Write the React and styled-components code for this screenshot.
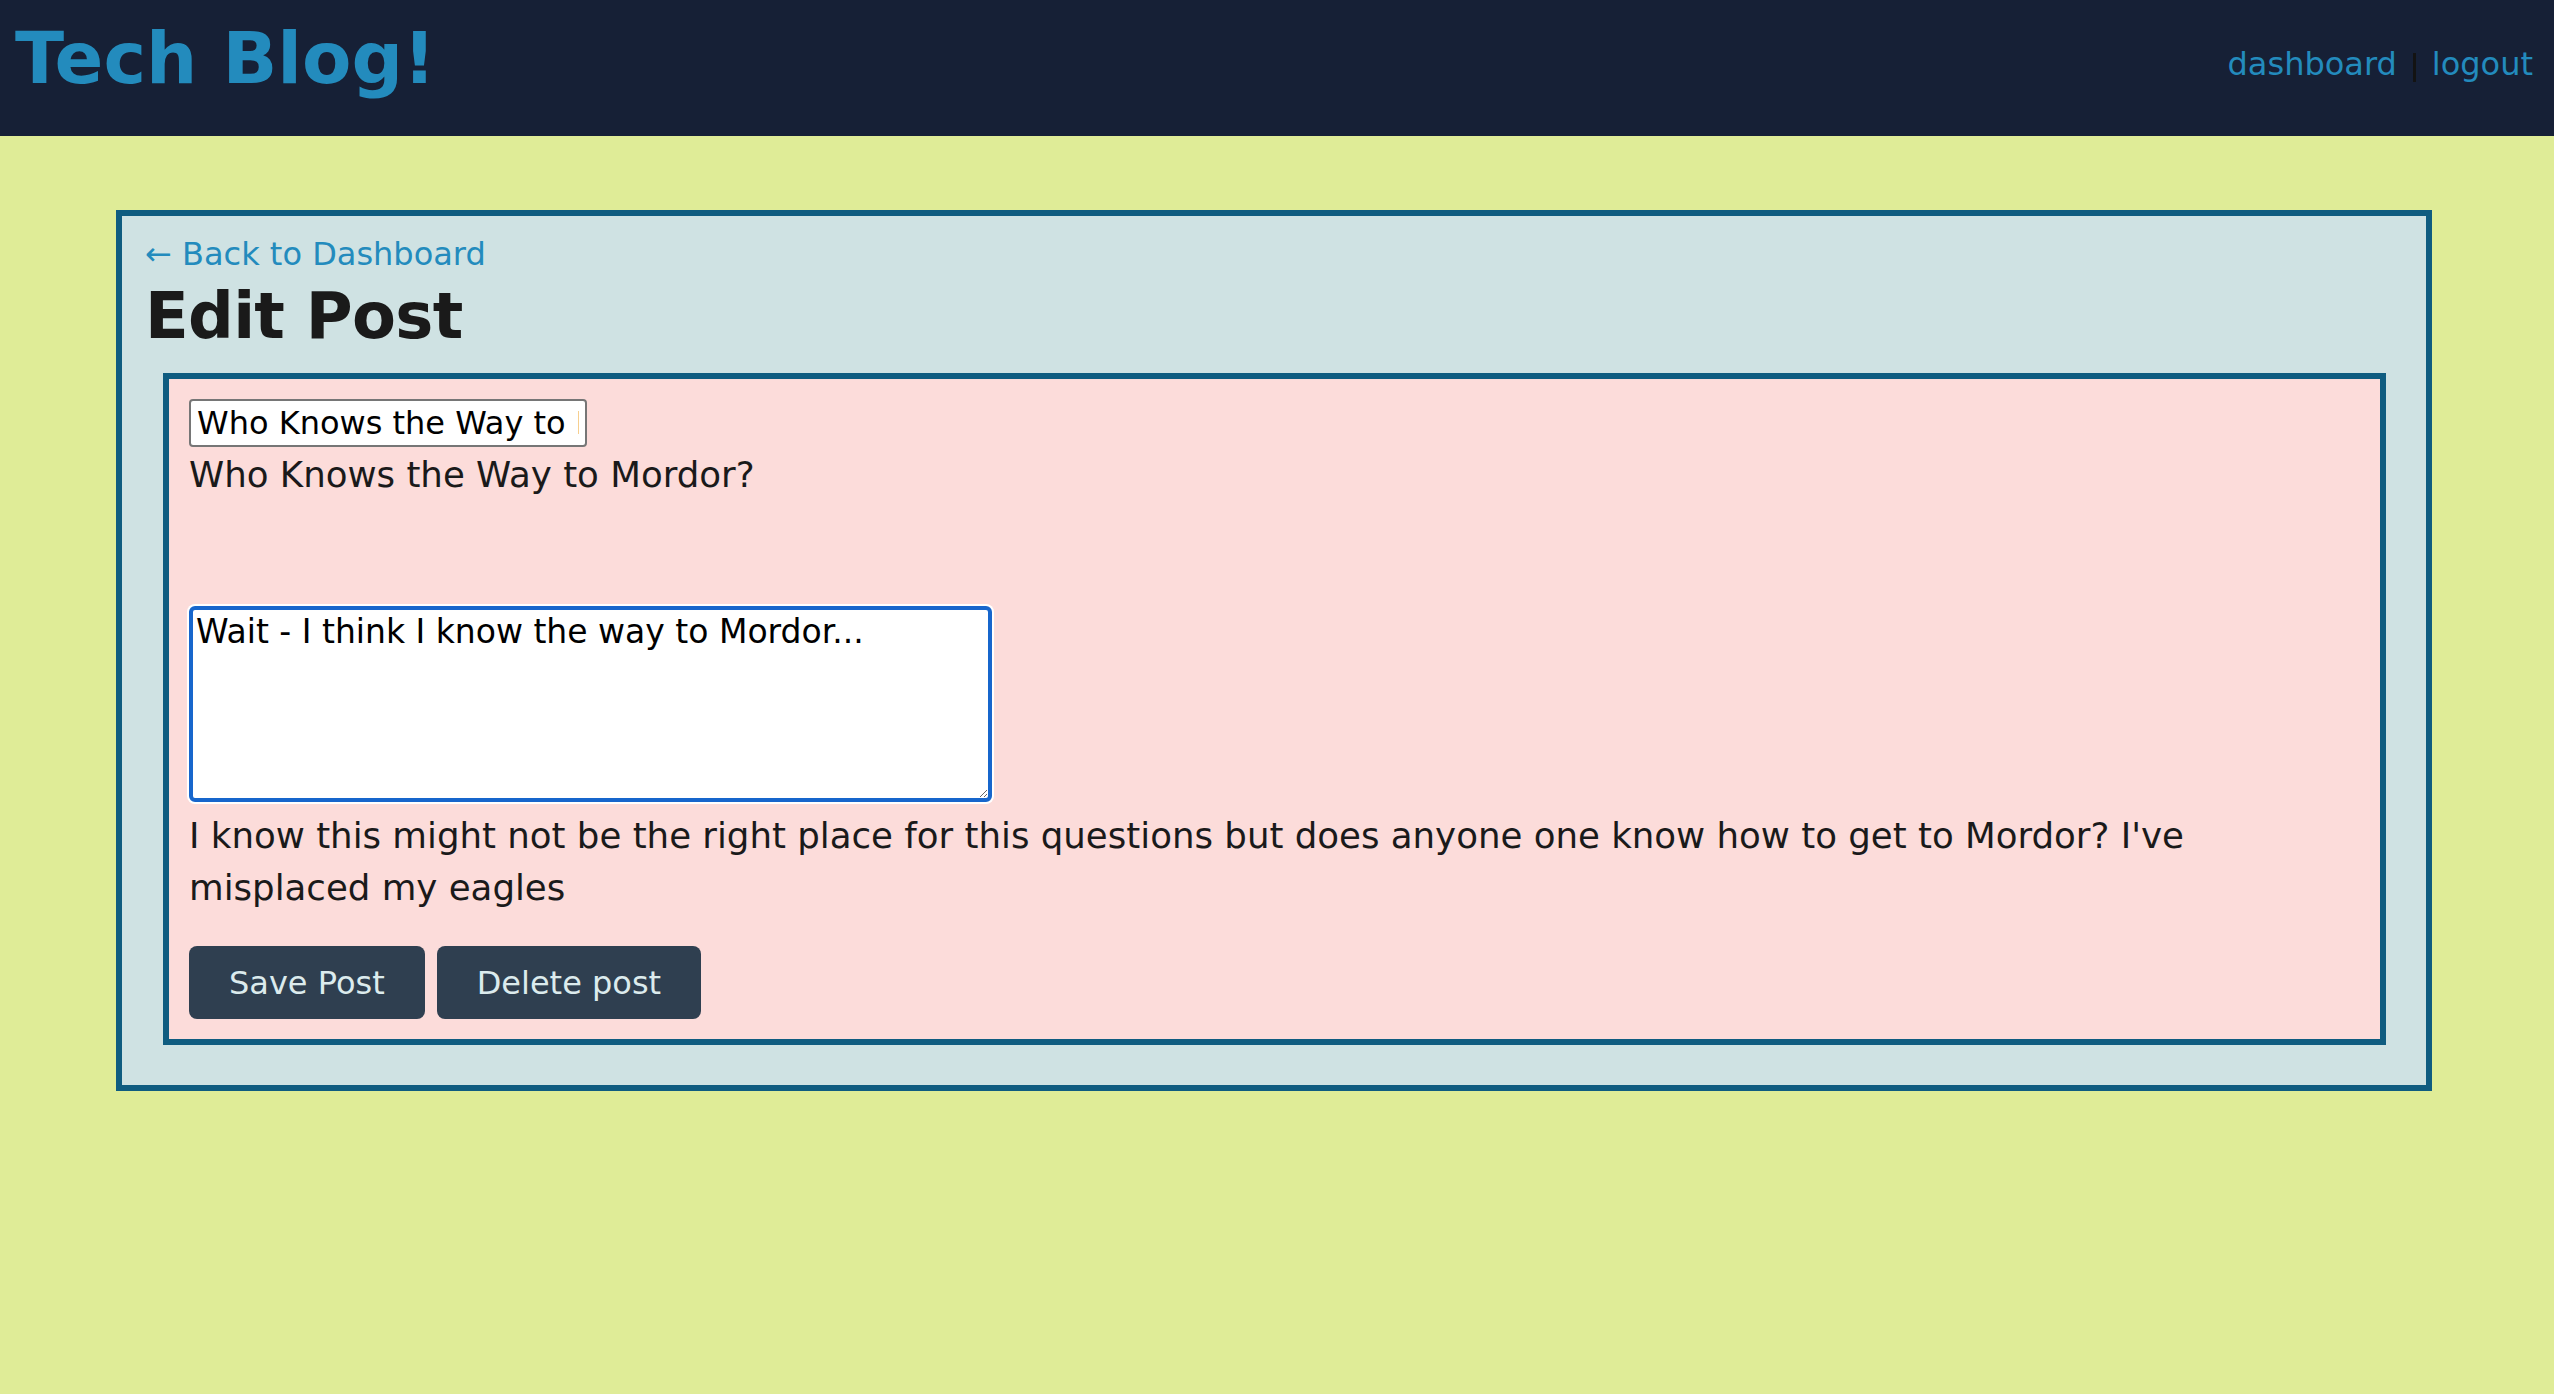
import React from "react";
import styled, { createGlobalStyle } from "styled-components";

const GlobalStyle = createGlobalStyle`
  html, body {
    margin: 0;
    padding: 0;
    background: #dfec97;
    font-family: "DejaVu Sans", Verdana, sans-serif;
    color: #1a1a1a;
  }
  body { min-height: 1394px; }
  * { box-sizing: border-box; }
`;

const Header = styled.header`
  height: 136px;
  background: #162036;
  display: flex;
  justify-content: space-between;
  align-items: flex-start;
`;

const Brand = styled.h1`
  margin: 22px 0 0 15px;
  font-size: 72px;
  line-height: 72px;
  font-weight: 700;
  color: #238bbd;
`;

const Nav = styled.nav`
  margin: 38px 21px 0 0;
  display: flex;
  align-items: center;
  gap: 16px;
  height: 52px;
`;

const NavLink = styled.a`
  font-size: 32px;
  line-height: 52px;
  color: #238bbd;
  text-decoration: none;
`;

const Separator = styled.span`
  display: inline-block;
  width: 3px;
  height: 29px;
  margin-top: 6px;
  background: #131313;
`;

const Panel = styled.main`
  margin: 74px 0 0 116px;
  width: 2316px;
  background: #cfe2e3;
  border: 6px solid #0f5c80;
  padding: 12px 40px 40px 23px;
`;

const BackLink = styled.a`
  display: block;
  font-size: 32px;
  line-height: 52px;
  color: #238bbd;
  text-decoration: none;
`;

const Title = styled.h1`
  margin: 0 0 21px;
  font-size: 64px;
  line-height: 72px;
  font-weight: 700;
  letter-spacing: -0.7px;
  color: #1a1a1a;
`;

const EditCard = styled.form`
  margin-left: 18px;
  background: #fcdcda;
  border: 6px solid #0f5c80;
  padding: 20px;
`;

const TitleInput = styled.input`
  display: block;
  width: 398px;
  height: 48px;
  margin: 0;
  padding: 0 6px;
  border: 2px solid #767676;
  border-radius: 4px;
  background: #fff;
  font-family: "DejaVu Sans", Verdana, sans-serif;
  font-size: 32px;
  color: #000;
  outline: none;
`;

const Text = styled.p`
  margin: ${(p) => p.$top || 0}px 0 0;
  font-size: 35.6px;
  line-height: 52px;
  color: #1a1a1a;
  max-width: ${(p) => (p.$max ? `${p.$max}px` : "none")};
`;

const BodyArea = styled.textarea`
  display: block;
  width: 803px;
  height: 196px;
  margin: 105px 0 0;
  padding: 2px 3px;
  border: 4px solid #1766cc;
  border-radius: 6px;
  box-shadow: 0 0 0 2px #ffffff;
  background: #fff;
  font-family: "DejaVu Sans", Verdana, sans-serif;
  font-size: 33px;
  color: #000;
  outline: none;
`;

const ButtonRow = styled.div`
  display: flex;
  gap: 12px;
  margin-top: 32px;
`;

const Button = styled.button`
  height: 73px;
  padding: 0 40px;
  border: none;
  border-radius: 8px;
  background: #2f3f50;
  color: #dcebed;
  font-family: "DejaVu Sans", Verdana, sans-serif;
  font-size: 32px;
  cursor: pointer;
`;

export default function App() {
  return (
    <>
      <GlobalStyle />
      <Header>
        <Brand>Tech Blog!</Brand>
        <Nav>
          <NavLink href="#">dashboard</NavLink>
          <Separator />
          <NavLink href="#">logout</NavLink>
        </Nav>
      </Header>
      <Panel>
        <BackLink href="#">← Back to Dashboard</BackLink>
        <Title>Edit Post</Title>
        <EditCard onSubmit={(e) => e.preventDefault()}>
          <TitleInput defaultValue="Who Knows the Way to Mordor?" />
          <Text $top={2}>Who Knows the Way to Mordor?</Text>
          <BodyArea defaultValue="Wait - I think I know the way to Mordor..." />
          <Text $top={8} $max={2100}>
            I know this might not be the right place for this questions but
            does anyone one know how to get to Mordor? I've misplaced my eagles
          </Text>
          <ButtonRow>
            <Button type="submit">Save Post</Button>
            <Button type="button">Delete post</Button>
          </ButtonRow>
        </EditCard>
      </Panel>
    </>
  );
}
